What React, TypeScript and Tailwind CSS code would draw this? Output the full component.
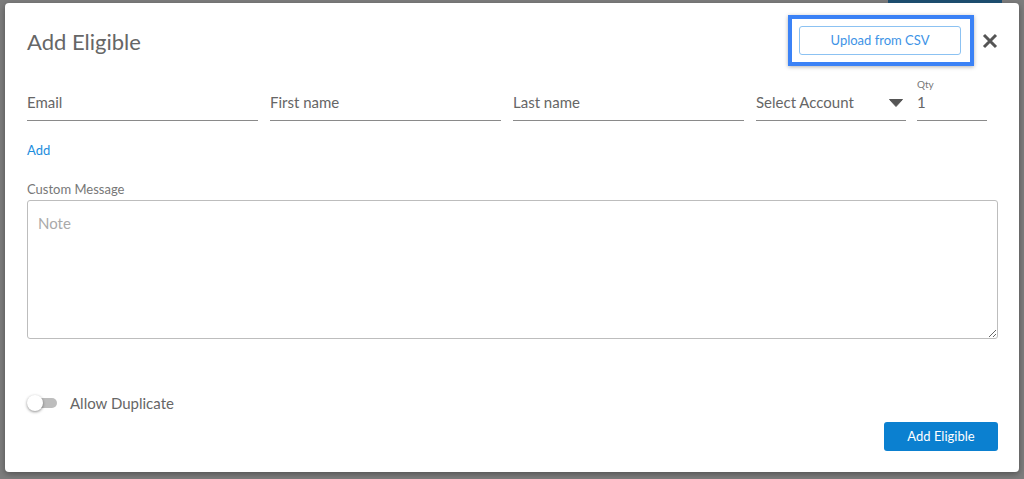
import React from 'react';

const font = { fontFamily: '"Lato", "Open Sans", sans-serif' };

const Field = ({ label, width, small }: { label: string; width: string; small?: string }) => (
  <div className={`${width} flex flex-col`}>
    <div className="h-[14px] text-[10px] leading-[14px] text-[#777]">{small ?? ''}</div>
    <div className="h-[30px] border-b border-[#8a8a8a] pt-[1px] text-[15px] leading-[20px] text-[#666]">{label}</div>
  </div>
);

export default function App() {
  return (
    <div className="min-h-screen w-full bg-[#7d7d7d]" style={font}>
      <div className="h-[3px] flex">
        <div className="ml-[888px] w-[114px] bg-[#1d4d6e]" />
      </div>
      <div className="ml-[5px] w-[1014px] h-[469px] bg-white rounded-[4px] shadow-[0_2px_6px_rgba(0,0,0,0.35)] pl-[22px] pr-[21px] pt-[12px] flex flex-col">
        <div className="flex items-center">
          <h2 className="flex-1 text-[22px] leading-[28px] text-[#666] mt-[2px]">Add Eligible</h2>
          <div className="border-[4px] border-[#3b82f6] pl-[7px] pr-[9px] py-[7px] shadow-[0_1px_4px_rgba(0,0,0,0.3)]">
            <button className="w-[162px] h-[29px] border border-[#8cc2f2] rounded-[3px] text-[13px] text-[#3d93e6]">
              Upload from CSV
            </button>
          </div>
          <button className="ml-[8px] w-[16px] h-[20px] flex items-center justify-center">
            <svg width="16" height="16" viewBox="0 0 16 16">
              <path d="M2 2 L14 14 M14 2 L2 14" stroke="#555" strokeWidth="3" strokeLinecap="butt" />
            </svg>
          </button>
        </div>

        <div className="mt-[11px] flex items-end">
          <Field label="Email" width="w-[231px]" />
          <div className="ml-[12px]"><Field label="First name" width="w-[231px]" /></div>
          <div className="ml-[12px]"><Field label="Last name" width="w-[231px]" /></div>
          <div className="ml-[12px] w-[150px] flex flex-col">
            <div className="h-[14px]" />
            <div className="h-[30px] border-b border-[#8a8a8a] pt-[1px] flex items-start justify-between text-[15px] leading-[20px] text-[#666]">
              <span>Select Account</span>
              <svg width="14" height="8" viewBox="0 0 14 8" className="mt-[7px] mr-[3px]">
                <path d="M0.5 0.5 L13.5 0.5 L7 7.5 Z" fill="#555" strokeLinejoin="round" stroke="#555" />
              </svg>
            </div>
          </div>
          <div className="ml-[11px]"><Field label="1" width="w-[70px]" small="Qty" /></div>
        </div>

        <a className="mt-[21px] text-[13px] leading-[16px] text-[#1c8ddd] w-fit">Add</a>

        <div className="mt-[23px] text-[13px] leading-[16px] text-[#777]">Custom Message</div>
        <textarea
          placeholder="Note"
          className="mt-[3px] h-[139px] w-full border border-[#bdbdbd] rounded-[3px] px-[10px] py-[12px] text-[15px] leading-[20px] text-[#666] placeholder:text-[#aaa] outline-none"
          style={font}
        />

        <div className="mt-[54px] flex items-center">
          <div className="relative w-[30px] h-[16px] flex items-center">
            <div className="ml-[7px] w-[23px] h-[10px] rounded-full bg-[#bdbdbd]" />
            <div className="absolute left-0 top-0 w-[16px] h-[16px] rounded-full bg-white shadow-[0_1px_3px_rgba(0,0,0,0.45)]" />
          </div>
          <span className="ml-[13px] text-[15px] leading-[20px] text-[#666]">Allow Duplicate</span>
        </div>

        <div className="mt-[9px] flex justify-end">
          <button className="w-[114px] h-[29px] rounded-[3px] bg-[#0b80d0] text-white text-[13px]">Add Eligible</button>
        </div>
      </div>
    </div>
  );
}
